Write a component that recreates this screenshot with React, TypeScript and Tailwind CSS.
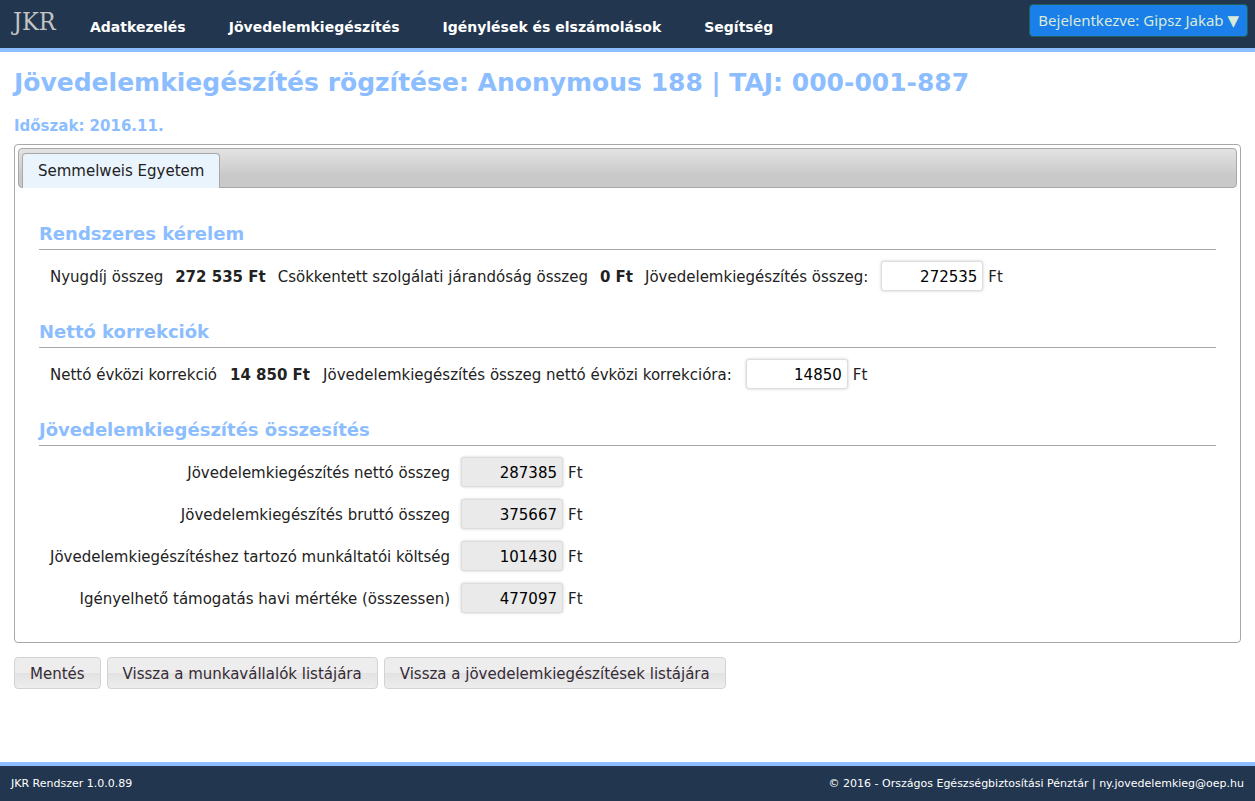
import { useState } from "react";
import type { ReactNode } from "react";

const navItems = [
  { href: "#adatkezeles", label: "Adatkezelés" },
  { href: "#jovedelemkiegeszites", label: "Jövedelemkiegészítés" },
  { href: "#igenylesek", label: "Igénylések és elszámolások" },
  { href: "#segitseg", label: "Segítség" },
];

const totals = [
  { id: "netto", label: "Jövedelemkiegészítés nettó összeg", value: "287385" },
  { id: "brutto", label: "Jövedelemkiegészítés bruttó összeg", value: "375667" },
  {
    id: "koltseg",
    label: "Jövedelemkiegészítéshez tartozó munkáltatói költség",
    value: "101430",
  },
  {
    id: "osszesen",
    label: "Igényelhető támogatás havi mértéke (összessen)",
    value: "477097",
  },
];

const actions = [
  "Mentés",
  "Vissza a munkavállalók listájára",
  "Vissza a jövedelemkiegészítések listájára",
];

function Section({ title, children }: { title: string; children: ReactNode }) {
  return (
    <section>
      <h3 className="mb-2.5 border-b border-[#a8a8a8] pb-px text-lg leading-7 font-bold text-[#8cbdff]">
        {title}
      </h3>
      {children}
    </section>
  );
}

type AmountInputProps = {
  id: string;
  value: string;
  onChange?: (value: string) => void;
};

function AmountInput({ id, value, onChange }: AmountInputProps) {
  return (
    <span className="flex items-baseline gap-[5px] py-px pl-px">
      <input
        id={id}
        type="text"
        value={value}
        readOnly={!onChange}
        onChange={(e) => onChange?.(e.target.value)}
        className="h-[30px] w-[102px] rounded-[3px] border border-[#dddddd] bg-white px-[5px] pt-px text-right text-black shadow-[0_0_3px_#cccccc] outline-none read-only:bg-[#eaeaea]"
      />
      <span>Ft</span>
    </span>
  );
}

export default function App() {
  const [income, setIncome] = useState("272535");
  const [correction, setCorrection] = useState("14850");

  return (
    <div className="flex min-h-screen flex-col bg-white font-[Verdana,'DejaVu_Sans',sans-serif] text-[15px] leading-5 text-[#222222]">
      <header className="flex h-13 items-start justify-between border-b-4 border-[#8cbdff] bg-[#22364f] pr-[7px] pl-[13px]">
        <div className="flex items-start">
          <a
            href="#"
            className="w-[77px] pt-1 font-['DejaVu_Serif_Condensed','Noto_Serif','DejaVu_Serif',serif] text-[25px] leading-9 text-[#c4c4c4]"
          >
            JKR
          </a>
          <nav className="flex gap-[43px] pt-[17px] text-sm font-bold text-white">
            {navItems.map((item) => (
              <a key={item.href} href={item.href}>
                {item.label}
              </a>
            ))}
          </nav>
        </div>
        <button
          type="button"
          className="mt-1 h-[33px] rounded-sm border border-[#1f6257] bg-[#1a7fe8] px-2 pb-0.5 font-['Noto_Sans','DejaVu_Sans',sans-serif] text-[15px] text-[#d9ead9]"
        >
          Bejelentkezve: Gipsz Jakab ▼
        </button>
      </header>

      <main className="flex-1 px-3.5 pt-[15px]">
        <h1 className="text-[25px] leading-8 font-bold text-[#8cbdff]">
          Jövedelemkiegészítés rögzítése: Anonymous 188 | TAJ: 000-001-887
        </h1>
        <h2 className="mt-[17px] font-bold text-[#8cbdff]">Időszak: 2016.11.</h2>

        <div className="mt-2 rounded border border-[#a8a8a8] px-[3px] pt-[3px] pb-7">
          {/* Tab bar */}
          <div
            role="tablist"
            className="flex h-10 items-end rounded border border-[#a8a8a8] bg-linear-to-b from-[#e3e3e3] to-[#c9c9c9] to-70% pl-[3px]"
          >
            <button
              type="button"
              role="tab"
              aria-selected="true"
              className="-mb-px h-[35px] rounded-t border border-b-0 border-[#a8a8a8] bg-[#eaf4fd] px-[15px]"
            >
              Semmelweis Egyetem
            </button>
          </div>

          <div className="flex flex-col gap-[26px] px-[21px] pt-8">
            <Section title="Rendszeres kérelem">
              <div className="flex items-baseline gap-3 px-[11px]">
                <span>Nyugdíj összeg</span>
                <strong>272 535 Ft</strong>
                <span>Csökkentett szolgálati járandóság összeg</span>
                <strong>0 Ft</strong>
                <label htmlFor="income">Jövedelemkiegészítés összeg:</label>
                <AmountInput id="income" value={income} onChange={setIncome} />
              </div>
            </Section>

            <Section title="Nettó korrekciók">
              <div className="flex items-baseline gap-[13px] px-[11px]">
                <span>Nettó évközi korrekció</span>
                <strong>14 850 Ft</strong>
                <label htmlFor="correction">
                  Jövedelemkiegészítés összeg nettó évközi korrekcióra:
                </label>
                <AmountInput
                  id="correction"
                  value={correction}
                  onChange={setCorrection}
                />
              </div>
            </Section>

            <Section title="Jövedelemkiegészítés összesítés">
              <div className="grid grid-cols-[max-content_max-content] items-baseline gap-2.5 px-[11px]">
                {totals.map((total) => (
                  <div key={total.id} className="contents">
                    <label htmlFor={total.id} className="text-right">
                      {total.label}
                    </label>
                    <AmountInput id={total.id} value={total.value} />
                  </div>
                ))}
              </div>
            </Section>
          </div>
        </div>

        <div className="mt-3.5 flex gap-1.5">
          {actions.map((action) => (
            <button
              key={action}
              type="button"
              className="h-8 rounded border border-[#d3d3d3] bg-linear-to-b from-[#ededed] from-50% via-[#e2e2e2] via-50% to-[#ededed] px-[15px] pt-px text-[#362b36]"
            >
              {action}
            </button>
          ))}
        </div>
      </main>

      <footer className="flex h-[39px] items-center justify-between border-t-4 border-[#8cbdff] bg-[#22364f] px-[11px] text-[11px] text-white">
        <span>JKR Rendszer 1.0.0.89</span>
        <span>
          © 2016 - Országos Egészségbiztosítási Pénztár |{" "}
          <a href="mailto:ny.jovedelemkieg@oep.hu">ny.jovedelemkieg@oep.hu</a>
        </span>
      </footer>
    </div>
  );
}
